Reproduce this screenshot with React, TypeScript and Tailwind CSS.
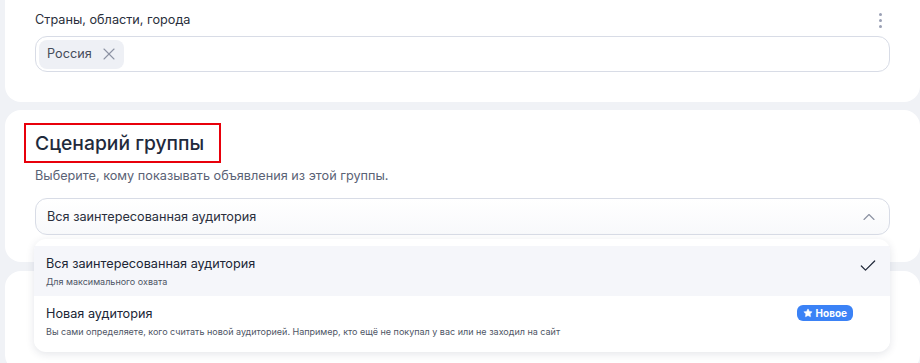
import { Check, ChevronUp, X, Star } from "lucide-react";

const font = { fontFamily: "Inter, 'Noto Sans', sans-serif" };

function MenuItem({
  title,
  hint,
  selected,
  badge,
}: {
  title: string;
  hint: string;
  selected?: boolean;
  badge?: boolean;
}) {
  return (
    <div
      className={`flex items-start justify-between pl-3 pr-3 h-[50px] pt-[9px] ${
        selected ? "bg-[#f5f6fa]" : "bg-white"
      }`}
    >
      <div className="flex flex-col">
        <span className="text-[12.7px] leading-[18px] text-[#202636]">{title}</span>
        <span className="text-[9px] leading-[14px] mt-[2px] text-[#4e5565]">{hint}</span>
      </div>
      {selected && <Check className="w-5 h-5 mt-[1px] text-[#222a3b]" strokeWidth={1.5} />}
      {badge && (
        <span className="mr-[25px] flex items-center gap-[3px] h-[16px] px-[6px] rounded-[6px] bg-[#3b82f6] text-white text-[10px] font-bold">
          <Star className="w-[10px] h-[10px] fill-white" strokeWidth={1} />
          Новое
        </span>
      )}
    </div>
  );
}

export default function App() {
  return (
    <div className="relative h-[363px] w-[920px] overflow-hidden bg-[#f0f2f6] pl-[5px]" style={font}>
      {/* Location card, top cut off */}
      <div className="h-[102px] bg-white rounded-b-2xl pl-[30px] pr-[30px] pt-[10px]">
        <div className="flex items-center justify-between h-[20px]">
          <span className="text-[12.7px] text-[#2a2f3c]">Страны, области, города</span>
          <div className="flex flex-col gap-[3px] pr-[8px]">
            <span className="w-[3px] h-[3px] rounded-full bg-[#9aa0b4]" />
            <span className="w-[3px] h-[3px] rounded-full bg-[#9aa0b4]" />
            <span className="w-[3px] h-[3px] rounded-full bg-[#9aa0b4]" />
          </div>
        </div>
        <div className="mt-[6px] h-[36px] border border-[#d8dce6] rounded-xl flex items-center px-[3px]">
          <span className="flex items-center gap-[7px] h-[29px] pl-[8px] pr-[5px] rounded-lg bg-[#eef0f5] text-[12.7px] text-[#454b5a]">
            Россия
            <X className="w-[20px] h-[20px] text-[#8d93a3]" strokeWidth={1.3} />
          </span>
        </div>
      </div>

      {/* Scenario card */}
      <div className="mt-[8px] h-[152px] bg-white rounded-2xl pl-[30px] pr-[30px] pt-[13px]">
        <div className="-ml-[11px] w-[197px] h-[40px] border-2 border-[#e8000b] flex items-center pl-[9px]">
          <span className="text-[19.3px] font-medium text-[#1f2a3c]">Сценарий группы</span>
        </div>
        <p className="mt-[3px] text-[12.7px] leading-[20px] text-[#5a6275]">
          Выберите, кому показывать объявления из этой группы.
        </p>
        <div className="mt-[12px] h-[37px] border border-[#d8dce6] rounded-xl flex items-center justify-between pl-[11px] pr-[10px] bg-gradient-to-b from-white to-[#f8f9fb]">
          <span className="text-[12.7px] text-[#2a2f3c]">Вся заинтересованная аудитория</span>
          <ChevronUp className="w-[20px] h-[20px] text-[#8d93a3]" strokeWidth={1.4} />
        </div>
      </div>

      {/* Next card */}
      <div className="mt-[9px] h-[100px] bg-white rounded-2xl" />

      {/* Dropdown menu */}
      <div className="absolute left-[34px] top-[239px] w-[856px] h-[113px] bg-white rounded-xl shadow-[0_2px_8px_rgba(30,40,70,0.12)] pt-[7px] overflow-hidden">
        <MenuItem title="Вся заинтересованная аудитория" hint="Для максимального охвата" selected />
        <MenuItem
          title="Новая аудитория"
          hint="Вы сами определяете, кого считать новой аудиторией. Например, кто ещё не покупал у вас или не заходил на сайт"
          badge
        />
      </div>
    </div>
  );
}
